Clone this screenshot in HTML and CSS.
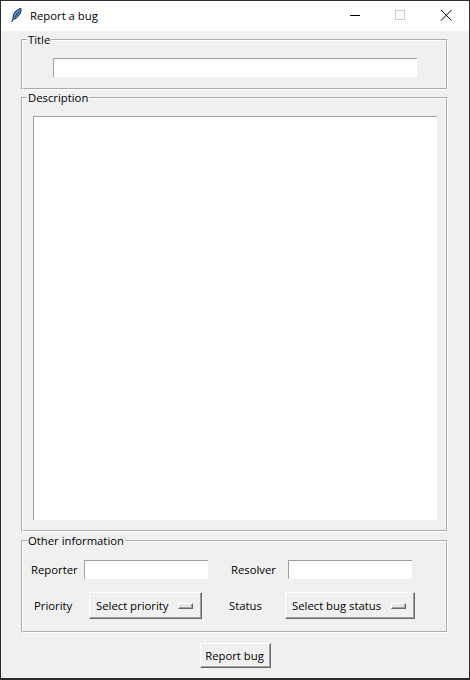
FILE: index.html
```html
<!DOCTYPE html>
<html lang="en">
<head>
<meta charset="utf-8">
<title>Report a bug</title>
<link rel="stylesheet" href="styles.css">
</head>
<body>
<div class="window">
  <header class="titlebar">
    <svg class="app-icon" width="16" height="16" viewBox="0 0 16 16" aria-hidden="true">
      <path d="M13 1.500C9.500 2 6.500 4.500 5.500 8c-.5 1.700-.6 3.200-.4 4.400C7.500 12.200 10 10 11.500 7.500 12.800 5.500 13.300 3.300 13 1.500Z" fill="#5b8fdc" stroke="#10203c" stroke-width="1"/>
      <path d="M11 4.500 7 10M5 12 3.800 15" fill="none" stroke="#10203c" stroke-width="1"/>
    </svg>
    <span class="app-title">Report a bug</span>
    <div class="caption">
      <svg class="cap" width="46" height="30" viewBox="0 0 46 30" aria-hidden="true"><path d="M19 14.500H29" stroke="#000" fill="none"/></svg>
      <svg class="cap" width="46" height="30" viewBox="0 0 46 30" aria-hidden="true"><rect x="18.500" y="9.500" width="9" height="9" stroke="#ccc" fill="none"/></svg>
      <svg class="cap" width="46" height="30" viewBox="0 0 46 30" aria-hidden="true"><path d="M18 9 28.500 19.500M28.500 9 18 19.500" stroke="#000" fill="none"/></svg>
    </div>
  </header>
  <main class="content">
    <fieldset class="group group-title">
      <legend>Title</legend>
      <div class="body body-title"><input class="field field-title" type="text"></div>
    </fieldset>
    <fieldset class="group group-desc">
      <legend>Description</legend>
      <div class="body body-desc"><textarea class="field field-desc"></textarea></div>
    </fieldset>
    <fieldset class="group group-other">
      <legend>Other information</legend>
      <div class="body body-other">
        <div class="row row-fields">
          <label class="lbl lbl-reporter">Reporter</label>
          <input class="field field-short" type="text">
          <label class="lbl lbl-resolver">Resolver</label>
          <input class="field field-short" type="text">
        </div>
        <div class="row row-menus">
          <span class="lbl lbl-priority">Priority</span>
          <button class="menu menu-priority" type="button">Select priority<i class="ind"></i></button>
          <span class="lbl lbl-status">Status</span>
          <button class="menu menu-status" type="button">Select bug status<i class="ind"></i></button>
        </div>
      </div>
    </fieldset>
    <div class="actions"><button class="report" type="button">Report bug</button></div>
  </main>
</div>
</body>
</html>
```
FILE: styles.css
```css
* { box-sizing: border-box; }
html, body { margin: 0; padding: 0; }
body { background: #f0f0f0; font-family: "Open Sans", "Liberation Sans", sans-serif; font-size: 11.3px; color: #000; }
.window { width: 470px; height: 680px; border: 1px solid #2b2b2b; border-bottom-width: 2px; display: flex; flex-direction: column; background: #f0f0f0; overflow: hidden; }
.titlebar { height: 30px; background: #fff; display: flex; align-items: center; flex: none; padding-left: 7px; }
.app-icon { flex: none; margin-top: -2px; }
.app-title { margin-left: 6px; flex: 1; position: relative; top: -1px; }
.caption { display: flex; }
.cap { display: block; }
.content { flex: 1; padding: 1px 21px 0 20px; display: flex; flex-direction: column; }
.group { margin: 0; min-width: 0; border: 2px groove #fff; padding: 0; }
.group legend { margin-left: 4px; padding: 0 1px; line-height: 16px; height: 16px; }
.group-title { height: 58px; }
.group-desc { height: 442px; }
.group-other { height: 100px; margin-top: 1px; }
.body-title { padding: 10px 0 0 30px; }
.body-desc { padding: 10px 0 0 10px; }
.body-other { padding: 11px 0 0 8px; }
.field { display: block; background: #fff; border: 0; border-top: 1px solid #a0a0a0; border-left: 1px solid #a0a0a0; outline: 0; padding: 0; margin: 0; resize: none; border-radius: 0; }
.field-title { width: 364px; height: 19px; }
.field-desc { width: 404px; height: 404px; }
.field-short { width: 124px; height: 19px; }
.row { display: flex; align-items: center; }
.row-menus { margin-top: 13px; }
.lbl { display: block; }
.lbl-reporter { width: 53px; }
.lbl-resolver { width: 57px; margin-left: 23px; }
.lbl-priority { width: 55px; margin-left: 3px; }
.lbl-status { width: 56px; margin-left: 27px; }
.menu, .report { font: inherit; color: #000; background: #f0f0f0; border: 1px solid; border-color: #fff #696969 #696969 #fff; border-radius: 0; margin: 0; box-shadow: inset -1px -1px 0 #a0a0a0; }
.menu { height: 27px; display: flex; align-items: center; padding: 0 0 0 6px; }
.menu-priority { width: 113px; }
.menu-status { width: 130px; }
.ind { width: 15px; height: 6px; background: #e6e6e6; border: 1px solid; border-color: #fff #696969 #696969 #fff; box-shadow: inset -1px -1px 0 #a0a0a0; margin-left: auto; margin-right: 8px; }
.actions { display: flex; justify-content: center; margin-top: 10px; padding-left: 2px; }
.report { width: 71px; height: 25px; padding: 0 2px 0 0; }
```
